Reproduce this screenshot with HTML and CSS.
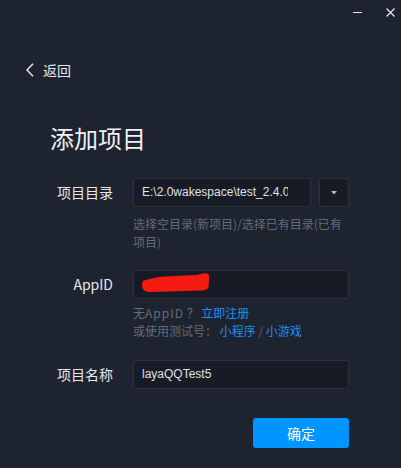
FILE: index.html
```html
<!DOCTYPE html>
<html lang="zh-CN">
<head>
<meta charset="utf-8">
<title>添加项目</title>
<link rel="stylesheet" href="styles.css">
</head>
<body>
<div class="window">
  <div class="titlebar">
    <svg class="tb-icon" width="9" height="9" viewBox="0 0 9 9"><line x1="0" y1="4.5" x2="9" y2="4.5" stroke="#e6e8ec" stroke-width="1"/></svg>
    <svg class="tb-icon" width="9" height="9" viewBox="0 0 9 9"><path d="M0.5 0.5 L8.5 8.5 M8.5 0.5 L0.5 8.5" stroke="#e6e8ec" stroke-width="1.2" fill="none"/></svg>
  </div>
  <div class="back">
    <svg width="8" height="14" viewBox="0 0 8 14"><path d="M7 0.8 L1 7 L7 13.2" stroke="#e6e8ec" stroke-width="1.5" fill="none"/></svg>
    <span>返回</span>
  </div>
  <h1 class="title">添加项目</h1>
  <div class="form">
    <div class="row">
      <div class="label">项目目录</div>
      <div class="field">
        <div class="inline">
          <div class="input path"><span class="clip">E:\2.0wakespace\test_2.4.0</span></div>
          <div class="dropdown"><svg width="6" height="4" viewBox="0 0 6 4"><path d="M0 0 L6 0 L3 3.5 Z" fill="#b4b8c0"/></svg></div>
        </div>
        <div class="help help-first">选择空目录(新项目)/选择已有目录(已有项目)</div>
      </div>
    </div>
    <div class="row row-appid">
      <div class="label">AppID</div>
      <div class="field">
        <div class="input masked">
          <svg class="mask" width="68" height="20" viewBox="0 0 68 20"><path d="M0 12 C0 9 1 7.5 4 7 C10 5 16 4 22 3.5 L55 2 C60 1 63 0 65 0.5 C67 1 67.5 3 67 6 L66.5 14 C66 16 64 17 60 17.5 L10 19 C3 19.5 0 17 0 12 Z" fill="#f51b13"/></svg>
        </div>
        <div class="help help-second">
          <div>无<span class="wide">AppID</span> ？ <span class="link">立即注册</span></div>
          <div>或使用测试号： <span class="link">小程序</span> / <span class="link">小游戏</span></div>
        </div>
      </div>
    </div>
    <div class="row row-name">
      <div class="label">项目名称</div>
      <div class="field">
        <div class="input">layaQQTest5</div>
      </div>
    </div>
    <div class="actions">
      <button class="confirm">确定</button>
    </div>
  </div>
</div>
</body>
</html>
```

FILE: styles.css
```css
html, body {
  margin: 0;
  padding: 0;
  background: #1e2330;
}
.window {
  width: 401px;
  height: 468px;
  background: #1e2330;
  color: #e6e8ec;
  font-family: "Noto Sans CJK SC", "Noto Sans", sans-serif;
  overflow: hidden;
}
.titlebar {
  display: flex;
  justify-content: flex-end;
  gap: 24px;
  padding: 8px 6px 0 0;
  height: 9px;
}
.tb-icon {
  display: block;
}
.back {
  margin-top: 43px;
  padding-left: 26px;
  height: 20px;
  display: flex;
  align-items: center;
  gap: 9px;
  font-size: 14px;
  line-height: 20px;
}
.back svg {
  display: block;
}
.title {
  margin: 42px 0 0 0;
  padding-left: 50px;
  font-size: 24px;
  line-height: 32px;
  font-weight: 400;
  color: #f0f1f3;
}
.form {
  margin-top: 24px;
  padding-left: 51px;
}
.row {
  display: flex;
  gap: 20px;
}
.row-appid {
  margin-top: 19px;
}
.row-name {
  margin-top: 20px;
}
.label {
  width: 62px;
  height: 29px;
  line-height: 29px;
  text-align: right;
  font-size: 14px;
  color: #e6e8ec;
  flex-shrink: 0;
}
.field {
  width: 216px;
}
.inline {
  display: flex;
  gap: 8px;
}
.input {
  box-sizing: border-box;
  height: 29px;
  width: 216px;
  background: #171b25;
  border: 1px solid #2c313d;
  border-radius: 3px;
  padding: 0 8px;
  font-family: "Liberation Sans", "Noto Sans CJK SC", sans-serif;
  font-size: 12px;
  line-height: 27px;
  color: #dfe1e5;
  white-space: nowrap;
  overflow: hidden;
}
.path {
  width: 178px;
  padding-right: 22px;
}
.clip {
  display: block;
  overflow: hidden;
}
.masked {
  position: relative;
}
.mask {
  position: absolute;
  left: 8px;
  top: 2px;
}
.dropdown {
  box-sizing: border-box;
  width: 30px;
  height: 29px;
  background: #171b25;
  border: 1px solid #2c313d;
  border-radius: 3px;
  display: flex;
  align-items: center;
  justify-content: center;
}
.dropdown svg {
  display: block;
}
.help {
  font-size: 12px;
  line-height: 18px;
  color: #656b78;
}
.help-first {
  margin-top: 8px;
}
.help-second {
  margin-top: 5px;
}
.wide {
  letter-spacing: 1px;
}
.link {
  color: #1f8ef1;
}
.actions {
  margin-top: 29px;
  display: flex;
  justify-content: flex-end;
  width: 298px;
}
.confirm {
  width: 96px;
  height: 30px;
  border: none;
  border-radius: 3px;
  background: #0095ff;
  color: #ffffff;
  font-family: "Noto Sans CJK SC", sans-serif;
  font-size: 14px;
  padding: 0;
}
```
